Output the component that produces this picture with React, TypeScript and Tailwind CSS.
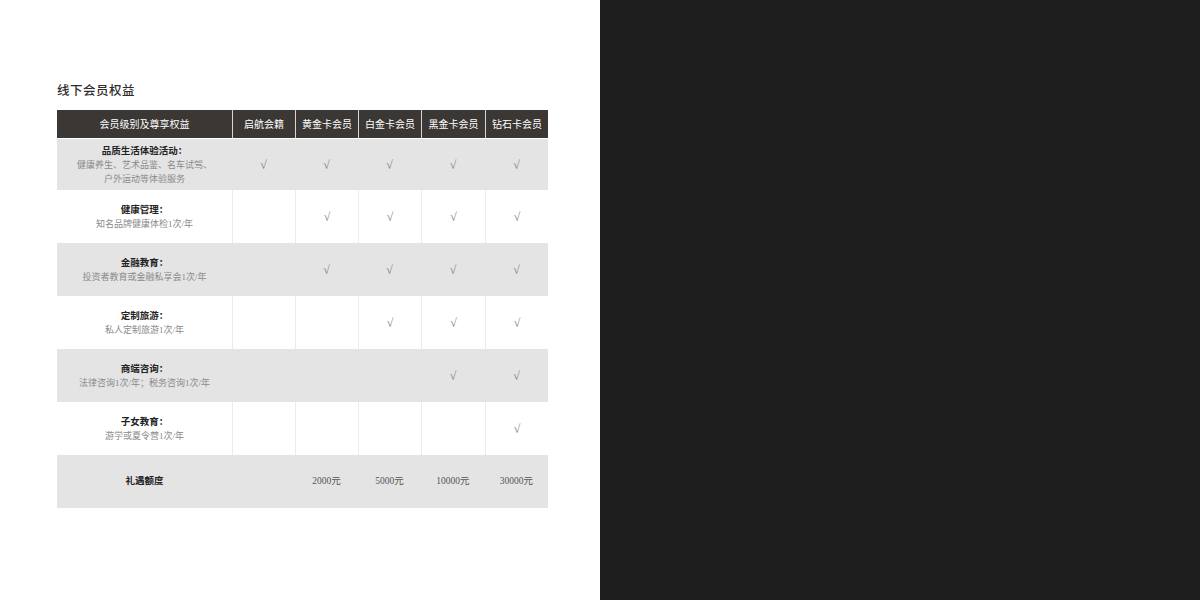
const font = "font-['Liberation_Serif','Noto_Sans_CJK_SC',serif]";

const LEVELS = ['启航会籍', '黄金卡会员', '白金卡会员', '黑金卡会员', '钻石卡会员'];

// 每行：标题、说明、从第几个等级开始享有
const ROWS = [
  { title: '品质生活体验活动：', desc: ['健康养生、艺术品鉴、名车试驾、', '户外运动等体验服务'], from: 0, gray: true, h: 'h-[51px]' },
  { title: '健康管理：', desc: ['知名品牌健康体检1次/年'], from: 1, gray: false, h: 'h-[53px]' },
  { title: '金融教育：', desc: ['投资者教育或金融私享会1次/年'], from: 1, gray: true, h: 'h-[53px]' },
  { title: '定制旅游：', desc: ['私人定制旅游1次/年'], from: 2, gray: false, h: 'h-[53px]' },
  { title: '商端咨询：', desc: ['法律咨询1次/年；税务咨询1次/年'], from: 3, gray: true, h: 'h-[53px]' },
  { title: '子女教育：', desc: ['游学或夏令营1次/年'], from: 4, gray: false, h: 'h-[53px]' },
];

const AMOUNTS = ['', '2000元', '5000元', '10000元', '30000元'];

const cols = 'grid grid-cols-[175px_63px_63px_63px_64px_63px]';

export default function App() {
  return (
    <div className={`${font} flex w-[1200px] h-[600px]`}>
      {/* 左侧白色页面 */}
      <div className="w-[600px] h-full bg-white pt-[82px] pl-[57px]">
        <h2 className="text-[12.5px] leading-[18px] text-[#2e2e2e] font-medium tracking-[0.5px]">线下会员权益</h2>

        <div className="mt-[10px] w-[491px]">
          {/* 表头 */}
          <div className={`${cols} h-[28px] bg-[#3b3735] text-white text-[10px] mb-px`}>
            <div className="flex items-center justify-center">会员级别及尊享权益</div>
            {LEVELS.map((l) => (
              <div key={l} className="flex items-center justify-center border-l border-[#d8d6d4]">
                {l}
              </div>
            ))}
          </div>

          {ROWS.map((r) => (
            <div key={r.title} className={`${cols} ${r.h} ${r.gray ? 'bg-[#e4e4e4]' : 'bg-white'}`}>
              <div className="flex flex-col items-center justify-center text-center leading-[14px]">
                <div className="text-[9.5px] font-bold text-[#222]">{r.title}</div>
                {r.desc.map((d) => (
                  <div key={d} className="text-[9px] text-[#8a8a8a]">{d}</div>
                ))}
              </div>
              {LEVELS.map((l, i) => (
                <div
                  key={l}
                  className={`flex items-center justify-center text-[12px] text-[#808080] ${r.gray ? '' : 'border-l border-[#ebebeb]'}`}
                >
                  {i >= r.from ? '√' : ''}
                </div>
              ))}
            </div>
          ))}

          {/* 礼遇额度 */}
          <div className={`${cols} h-[53px] bg-[#e4e4e4]`}>
            <div className="flex items-center justify-center text-[9.5px] font-bold text-[#222]">礼遇额度</div>
            {AMOUNTS.map((a, i) => (
              <div key={i} className="flex items-center justify-center text-[9.5px] text-[#555]">
                {a}
              </div>
            ))}
          </div>
        </div>
      </div>

      {/* 右侧深色区域 */}
      <div className="flex-1 h-full bg-[#1e1e1e]" />
    </div>
  );
}
